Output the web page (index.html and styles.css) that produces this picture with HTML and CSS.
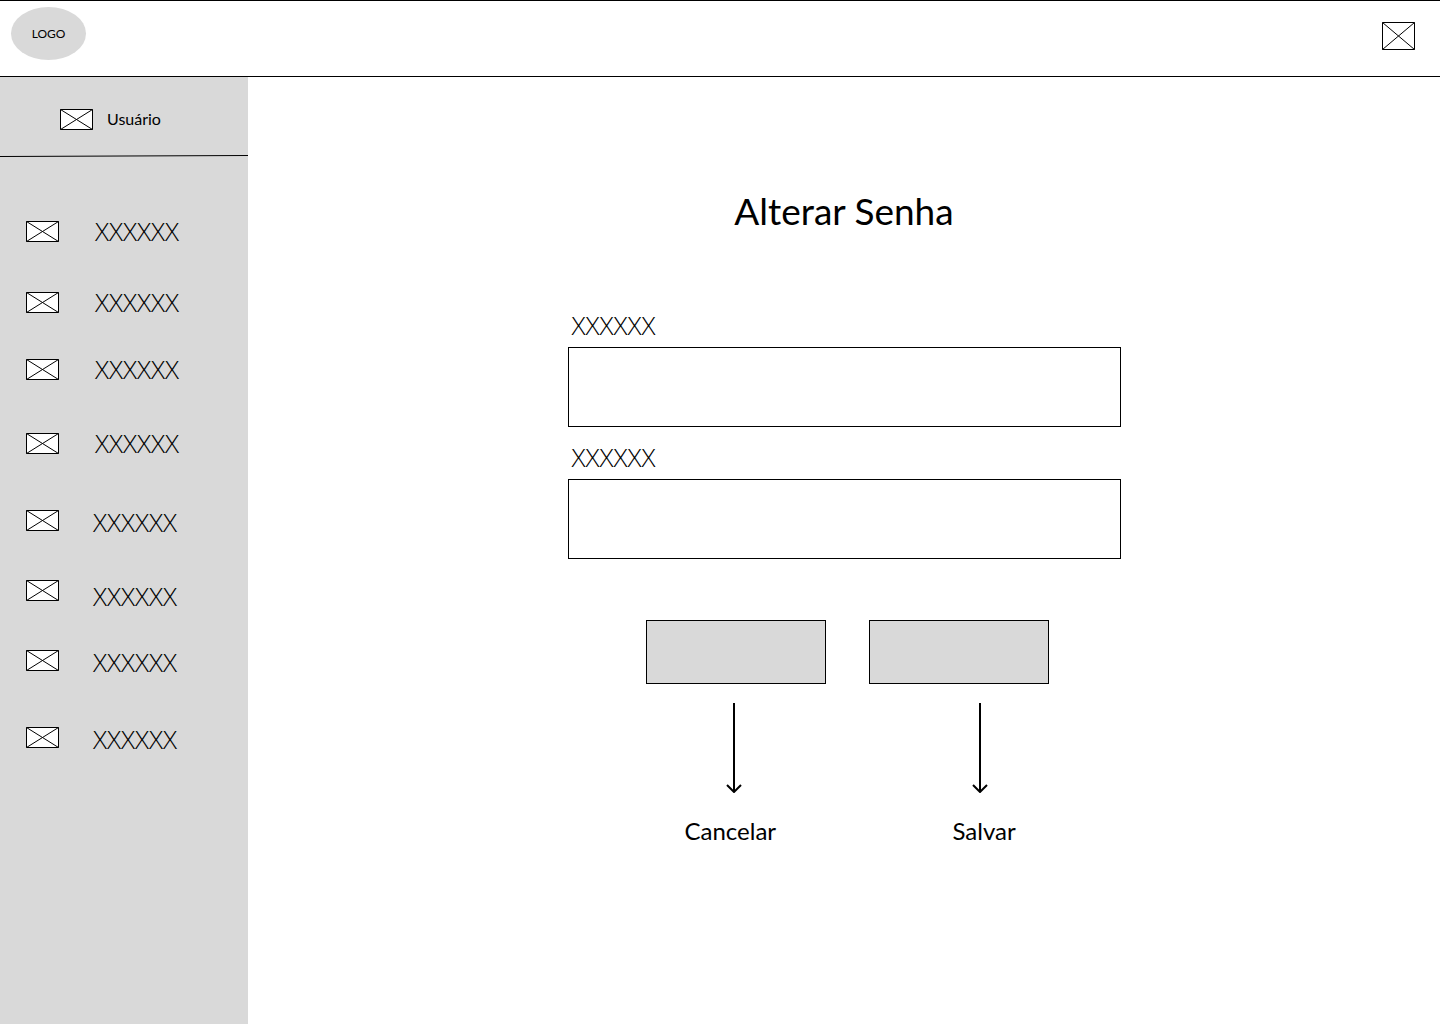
FILE: index.html
```html
<!DOCTYPE html>
<html lang="pt-BR">
<head>
<meta charset="utf-8">
<meta name="viewport" content="width=device-width, initial-scale=1">
<title>Alterar Senha</title>
<link rel="stylesheet" href="styles.css">
</head>
<body>
<svg width="0" height="0" class="symbols" aria-hidden="true">
  <symbol id="box" viewBox="0 0 33 21">
    <path d="M.5 .5h32v20H.5z" fill="#fff" stroke="#000"/>
    <path d="M.5 .5l32 20M.5 20.5l32-20" fill="none" stroke="#000"/>
  </symbol>
  <symbol id="arrow" viewBox="0 0 16 90">
    <path d="M8 0v89M1 82l7 7 7-7" fill="none" stroke="#000" stroke-width="2"/>
  </symbol>
</svg>
<header class="topbar">
  <a href="#" class="logo">LOGO</a>
  <svg class="topbar-icon" viewBox="0 0 33 28" aria-hidden="true">
    <path d="M.5 .5h32v27H.5zM.5 .5l32 27M.5 27.5l32-27" fill="none" stroke="#000"/>
  </svg>
</header>
<div class="layout">
  <aside class="sidebar">
    <div class="user">
      <svg class="icon" aria-hidden="true"><use href="#box"/></svg>
      <span class="user-name">Usuário</span>
    </div>
    <svg class="divider" viewBox="0 0 248 2" preserveAspectRatio="none" aria-hidden="true">
      <path d="M0 1.5L248 .5" stroke="#000"/>
    </svg>
    <nav>
      <ul class="menu">
        <li><a class="menu-link" href="#"><svg class="icon" aria-hidden="true"><use href="#box"/></svg><span class="placeholder">XXXXXX</span></a></li>
        <li><a class="menu-link" href="#"><svg class="icon" aria-hidden="true"><use href="#box"/></svg><span class="placeholder">XXXXXX</span></a></li>
        <li><a class="menu-link" href="#"><svg class="icon" aria-hidden="true"><use href="#box"/></svg><span class="placeholder">XXXXXX</span></a></li>
        <li><a class="menu-link" href="#"><svg class="icon" aria-hidden="true"><use href="#box"/></svg><span class="placeholder">XXXXXX</span></a></li>
        <li><a class="menu-link menu-link-low" href="#"><svg class="icon" aria-hidden="true"><use href="#box"/></svg><span class="placeholder">XXXXXX</span></a></li>
        <li><a class="menu-link menu-link-lower" href="#"><svg class="icon" aria-hidden="true"><use href="#box"/></svg><span class="placeholder">XXXXXX</span></a></li>
        <li><a class="menu-link menu-link-low" href="#"><svg class="icon" aria-hidden="true"><use href="#box"/></svg><span class="placeholder">XXXXXX</span></a></li>
        <li><a class="menu-link menu-link-low" href="#"><svg class="icon" aria-hidden="true"><use href="#box"/></svg><span class="placeholder">XXXXXX</span></a></li>
      </ul>
    </nav>
  </aside>
  <main class="content">
    <h1 class="title">Alterar Senha</h1>
    <form class="form">
      <div class="field">
        <label class="placeholder" for="senha">XXXXXX</label>
        <input id="senha" type="password">
      </div>
      <div class="field">
        <label class="placeholder" for="confirma">XXXXXX</label>
        <input id="confirma" type="password">
      </div>
      <div class="buttons">
        <button type="button" aria-labelledby="cancelar"></button>
        <button type="submit" aria-labelledby="salvar"></button>
      </div>
      <div class="arrows">
        <svg class="arrow" aria-hidden="true"><use href="#arrow"/></svg>
        <svg class="arrow" aria-hidden="true"><use href="#arrow"/></svg>
      </div>
      <div class="captions">
        <span id="cancelar">Cancelar</span>
        <span id="salvar">Salvar</span>
      </div>
    </form>
  </main>
</div>
</body>
</html>
```
FILE: styles.css
```css
* {
  box-sizing: border-box;
}

body {
  margin: 0;
  min-height: 100vh;
  display: flex;
  flex-direction: column;
  background: #fff;
  color: #000;
  font-family: Lato, sans-serif;
}

a {
  color: inherit;
  text-decoration: none;
}

.symbols {
  display: none;
}

.topbar {
  height: 77px;
  display: flex;
  justify-content: space-between;
  align-items: flex-start;
  padding: 6px 25px 0 11px;
  border-top: 1px solid #000;
  border-bottom: 1px solid #000;
}

.logo {
  width: 75px;
  height: 53px;
  border-radius: 50%;
  background: #d9d9d9;
  display: flex;
  align-items: center;
  justify-content: center;
  font-size: 12px;
}

.topbar-icon {
  width: 33px;
  height: 28px;
  margin-top: 15px;
}

.layout {
  flex: 1;
  display: flex;
}

.sidebar {
  width: 248px;
  flex-shrink: 0;
  background: #d9d9d9;
}

.user {
  height: 78px;
  display: flex;
  align-items: center;
  gap: 14px;
  padding: 6px 0 0 60px;
}

.user-name {
  font-size: 16px;
  line-height: 20px;
}

.icon {
  width: 33px;
  height: 21px;
  flex-shrink: 0;
}

.divider {
  display: block;
  width: 100%;
  height: 2px;
}

.placeholder {
  font-family: "Open Sans", sans-serif;
  font-size: 26px;
  font-weight: 300;
  line-height: 20px;
}

.menu {
  list-style: none;
  margin: 0;
  padding: 64px 0 0 26px;
  display: grid;
  grid-template-rows: 71px 67px 74px 77px 70px 70px 77px 28px;
}

.menu-link {
  display: flex;
  align-items: flex-start;
  gap: 36px;
}

.menu-link-low,
.menu-link-lower {
  gap: 34px;
}

.menu-link-low .placeholder {
  padding-top: 2px;
}

.menu-link-lower .placeholder {
  padding-top: 6px;
}

.content {
  flex: 1;
  display: flex;
  flex-direction: column;
  align-items: center;
  padding: 110px 24px 40px;
}

.title {
  margin: 0;
  font-size: 37px;
  font-weight: 400;
  line-height: 48px;
}

.form {
  width: 100%;
  max-width: 553px;
  padding-top: 80px;
}

.field {
  display: flex;
  flex-direction: column;
  gap: 12px;
  margin-bottom: 20px;
}

.field label {
  padding-left: 4px;
}

.field input {
  width: 100%;
  height: 80px;
  padding: 0 16px;
  border: 1px solid #000;
  border-radius: 0;
  background: #fff;
  font: inherit;
  font-size: 26px;
}

.buttons {
  display: flex;
  gap: 43px;
  padding: 41px 0 0 78px;
}

.buttons button {
  width: 180px;
  height: 64px;
  border: 1px solid #000;
  border-radius: 0;
  background: #d9d9d9;
}

.arrows {
  display: flex;
  gap: 230px;
  padding: 19px 0 0 158px;
}

.arrow {
  width: 16px;
  height: 90px;
}

.captions {
  display: grid;
  grid-template-columns: 268px 1fr;
  padding: 22px 0 0 117px;
  font-size: 24px;
  line-height: 32px;
}
```
